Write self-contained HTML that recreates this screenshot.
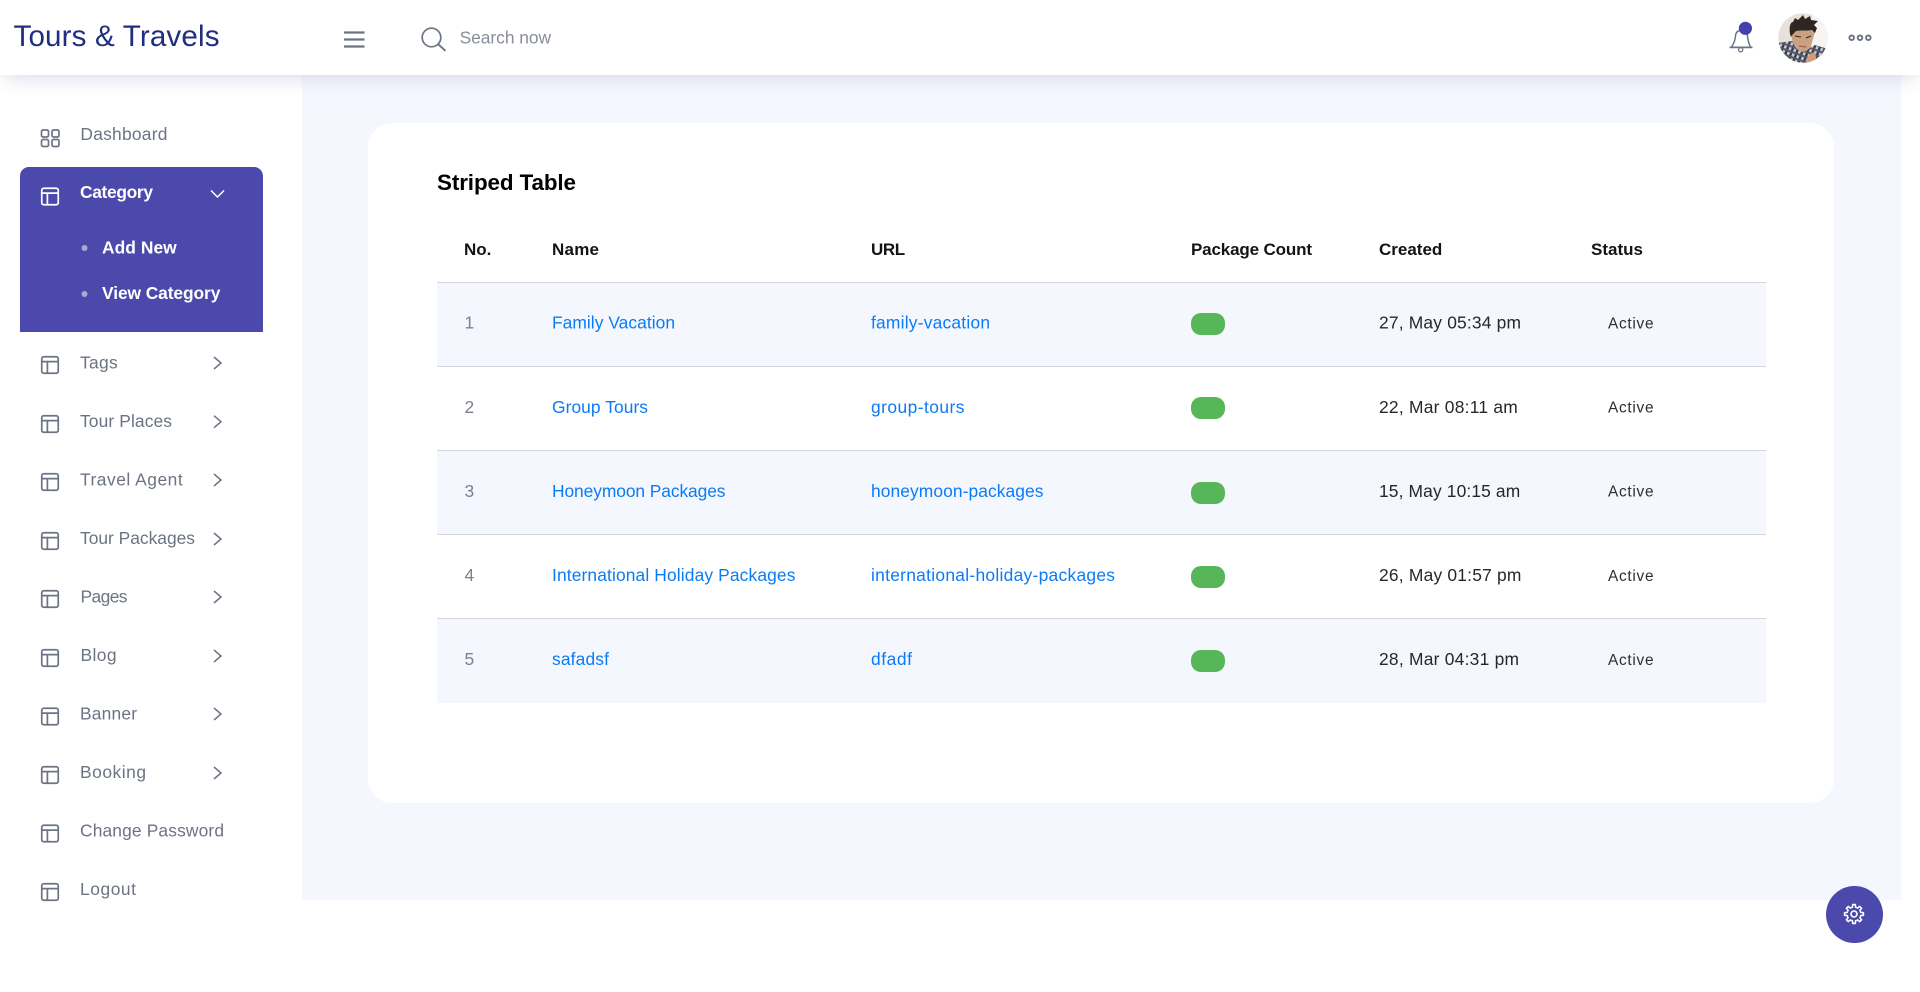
<!DOCTYPE html>
<html lang="en"><head><meta charset="utf-8"><title>Tours &amp; Travels</title>
<style>
html,body{margin:0;padding:0;background:#fff;width:1920px;height:992px;overflow:hidden}
body{position:relative;font-family:"Liberation Sans",sans-serif}
.b{position:absolute}
svg{position:absolute;left:0;top:0}
text{font-family:"Liberation Sans",sans-serif;font-size:17.4px}
.nav{fill:#6c7383}
.th{font-weight:700;fill:#141414;font-size:17px}
.a{fill:#0b7bf5}
.n{fill:#7b808d}
.d{fill:#24272c}
.s{font-size:15.4px;fill:#2c2f34}
.w{fill:#fff;font-weight:600}
.ic{fill:none;stroke:#6c7383;stroke-width:1.7}
.ch{fill:none;stroke:#6c7383;stroke-width:1.5}
</style></head><body>
<div class="b" style="left:302px;top:75px;width:1599px;height:825px;background:#f5f7ff"></div>
<div class="b" style="left:368px;top:123px;width:1466px;height:680px;background:#fff;border-radius:24px"></div>
<div class="b" style="left:437px;top:282px;width:1329px;height:1px;background:#d3d6de"></div>
<div class="b" style="left:437px;top:283px;width:1329px;height:83px;background:#f5f7ff"></div>
<div class="b" style="left:437px;top:366px;width:1329px;height:1px;background:#d3d6de"></div>
<div class="b" style="left:437px;top:450px;width:1329px;height:1px;background:#d3d6de"></div>
<div class="b" style="left:437px;top:451px;width:1329px;height:83px;background:#f5f7ff"></div>
<div class="b" style="left:437px;top:534px;width:1329px;height:1px;background:#d3d6de"></div>
<div class="b" style="left:437px;top:618px;width:1329px;height:1px;background:#d3d6de"></div>
<div class="b" style="left:437px;top:619px;width:1329px;height:84px;background:#f5f7ff"></div>
<div class="b" style="left:1191px;top:313px;width:34px;height:22px;border-radius:10px;background:#57b657"></div>
<div class="b" style="left:1191px;top:397px;width:34px;height:22px;border-radius:10px;background:#57b657"></div>
<div class="b" style="left:1191px;top:482px;width:34px;height:22px;border-radius:10px;background:#57b657"></div>
<div class="b" style="left:1191px;top:566px;width:34px;height:22px;border-radius:10px;background:#57b657"></div>
<div class="b" style="left:1191px;top:650px;width:34px;height:22px;border-radius:10px;background:#57b657"></div>
<div class="b" style="left:20px;top:167px;width:243px;height:165px;background:#4b49ac;border-radius:9px 9px 0 0"></div>
<div class="b" style="left:0;top:0;width:1920px;height:75px;background:#fff;box-shadow:0 5px 21px -5px #cdd1e1"></div>
<div class="b" style="left:1825.5px;top:885.5px;width:57px;height:57px;border-radius:50%;background:#4b49ac"></div>

<svg width="1920" height="992" viewBox="0 0 1920 992" xmlns="http://www.w3.org/2000/svg">
<defs>
<g id="lay"><rect x=".75" y=".75" width="16.5" height="16.5" rx="2"/><path d="M.75 5.6H17.25M6.4 5.6V17.25"/></g>
<clipPath id="av"><circle cx="1803" cy="38" r="24.7"/></clipPath>
<pattern id="pl" width="5" height="5" patternUnits="userSpaceOnUse" patternTransform="rotate(20)"><rect width="5" height="5" fill="#c9cbd3"/><rect width="2.5" height="5" fill="#3c3f4e"/><rect width="5" height="2" fill="#555868"/></pattern>
</defs>

<!-- header -->
<text x="13.5" y="46" style="font-size:29.6px" fill="#1f2e80" textLength="206" lengthAdjust="spacing">Tours &amp; Travels</text>
<path d="M344 32.5H364.5M344 39.5H364.5M344 46.5H364.5" fill="none" stroke="#6c7383" stroke-width="2.2"/>
<circle cx="431.5" cy="37.5" r="9.3" fill="none" stroke="#6c7383" stroke-width="1.7"/><path d="M438.3 44.3L445.5 50.8" stroke="#6c7383" stroke-width="1.9" fill="none"/>
<text x="459.6" y="43.5" fill="#898e9b" textLength="91.5" lengthAdjust="spacing">Search now</text>
<path d="M1731.5 47Q1735 42 1735.5 36Q1736 30.5 1741 30.5Q1747 30.5 1747.5 36Q1748 42 1750.5 47" fill="none" stroke="#6c7383" stroke-width="1.5"/>
<path d="M1729.5 47.4H1752.5" stroke="#6c7383" stroke-width="1.8"/>
<circle cx="1740.7" cy="49.8" r="2.1" fill="#fff" stroke="#6c7383" stroke-width="1.2"/>
<circle cx="1745.4" cy="28.3" r="6.6" fill="#4540ae"/>
<g clip-path="url(#av)">
<rect x="1778" y="13" width="50" height="50" fill="#e9e0da"/>
<rect x="1812" y="13" width="16" height="36" fill="#f7f5f3"/>
<path d="M1778 43L1792 41L1802 52L1815 45L1828 49V63H1778Z" fill="url(#pl)"/>
<path d="M1792 31C1791 40 1793 47 1800 51C1806 53 1811 49 1812 42L1815 32L1806 27Z" fill="#c9a080"/>
<path d="M1790 34C1789 28 1790 22 1793 22L1795 18L1798 20L1803 15L1805 19L1810 16L1811 20L1818 21L1814 25L1817 28L1815 33L1812 30C1806 31 1800 30 1796 31C1794 33 1792 35 1791 37Z" fill="#2d2623"/>
<path d="M1795 36L1801 37M1806 38L1811 36" stroke="#3b2a22" stroke-width="1.1"/>
<path d="M1799 46L1806 47" stroke="#8e5b4a" stroke-width="1.1"/>
<path d="M1806 63C1806 57 1810 53 1815 52L1817 63Z" fill="#d39b7a"/>
</g>
<g fill="none" stroke="#6c7383" stroke-width="1.9"><circle cx="1851.7" cy="37.7" r="2.3"/><circle cx="1860" cy="37.7" r="2.3"/><circle cx="1868.3" cy="37.7" r="2.3"/></g>

<!-- sidebar -->
<g class="ic"><rect x="41.5" y="130" width="7" height="7" rx="1.6"/><rect x="52" y="130" width="7" height="7" rx="1.6"/><rect x="41.5" y="139.5" width="7" height="7" rx="1.6"/><rect x="52" y="139.5" width="7" height="7" rx="1.6"/></g>
<text class="nav" x="80.4" y="140" textLength="87" lengthAdjust="spacing">Dashboard</text>

<g transform="translate(41,187.5)" fill="none" stroke="#fff" stroke-width="1.7"><use href="#lay"/></g>
<text class="w" x="80" y="198" textLength="73" lengthAdjust="spacing">Category</text>
<path d="M211 190.5L217.5 197L224 190.5" fill="none" stroke="#fff" stroke-width="1.5"/>
<circle cx="84.5" cy="248" r="3" fill="#a9a8cf"/>
<text class="w" x="102" y="253.3" textLength="74.7" lengthAdjust="spacing">Add New</text>
<circle cx="84.5" cy="294" r="3" fill="#a9a8cf"/>
<text class="w" x="102" y="299.2" textLength="118.4" lengthAdjust="spacing">View Category</text>

<g class="ic">
<use href="#lay" x="41" y="356"/><use href="#lay" x="41" y="415"/><use href="#lay" x="41" y="473"/><use href="#lay" x="41" y="532"/><use href="#lay" x="41" y="590"/><use href="#lay" x="41" y="649"/><use href="#lay" x="41" y="707.5"/><use href="#lay" x="41" y="766"/><use href="#lay" x="41" y="824.5"/><use href="#lay" x="41" y="883"/>
</g>
<g class="ch">
<path d="M214 357L221 363L214 369"/><path d="M214 415.7L221 421.7L214 427.7"/><path d="M214 474L221 480L214 486"/><path d="M214 533L221 539L214 545"/><path d="M214 591L221 597L214 603"/><path d="M214 650L221 656L214 662"/><path d="M214 708L221 714L214 720"/><path d="M214 767L221 773L214 779"/>
</g>
<text class="nav" x="80" y="368.3" textLength="37.7" lengthAdjust="spacing">Tags</text>
<text class="nav" x="80" y="426.8" textLength="92" lengthAdjust="spacing">Tour Places</text>
<text class="nav" x="80" y="485.3" textLength="102.7" lengthAdjust="spacing">Travel Agent</text>
<text class="nav" x="80" y="543.8" textLength="115" lengthAdjust="spacing">Tour Packages</text>
<text class="nav" x="80.5" y="602.3" textLength="47" lengthAdjust="spacing">Pages</text>
<text class="nav" x="80.5" y="660.8" textLength="36" lengthAdjust="spacing">Blog</text>
<text class="nav" x="80" y="719.3" textLength="57" lengthAdjust="spacing">Banner</text>
<text class="nav" x="80" y="777.8" textLength="66" lengthAdjust="spacing">Booking</text>
<text class="nav" x="80" y="836.3" textLength="144" lengthAdjust="spacing">Change Password</text>
<text class="nav" x="80" y="894.8" textLength="56" lengthAdjust="spacing">Logout</text>

<!-- card -->
<text x="437" y="190" style="font-size:22.4px;font-weight:700" fill="#000" textLength="139" lengthAdjust="spacing">Striped Table</text>
<text class="th" x="464" y="255" textLength="27.4" lengthAdjust="spacing">No.</text>
<text class="th" x="552" y="255" textLength="47" lengthAdjust="spacing">Name</text>
<text class="th" x="871" y="255" textLength="34.2" lengthAdjust="spacing">URL</text>
<text class="th" x="1191" y="255" textLength="121" lengthAdjust="spacing">Package Count</text>
<text class="th" x="1379" y="255" textLength="63.3" lengthAdjust="spacing">Created</text>
<text class="th" x="1591" y="255" textLength="52" lengthAdjust="spacing">Status</text>

<text class="n" x="464.5" y="328.5">1</text>
<text class="a" x="552" y="328.5" textLength="123" lengthAdjust="spacing">Family Vacation</text>
<text class="a" x="871" y="328.5" textLength="119" lengthAdjust="spacing">family-vacation</text>
<text class="d" x="1379" y="328.5" textLength="142" lengthAdjust="spacing">27, May 05:34 pm</text>
<text class="s" x="1608" y="328.5" textLength="45.5" lengthAdjust="spacing">Active</text>

<text class="n" x="464.5" y="413">2</text>
<text class="a" x="552" y="413" textLength="96" lengthAdjust="spacing">Group Tours</text>
<text class="a" x="871" y="413" textLength="93.5" lengthAdjust="spacing">group-tours</text>
<text class="d" x="1379" y="413" textLength="138.8" lengthAdjust="spacing">22, Mar 08:11 am</text>
<text class="s" x="1608" y="412.5" textLength="45.5" lengthAdjust="spacing">Active</text>

<text class="n" x="464.5" y="497">3</text>
<text class="a" x="552" y="497" textLength="173.5" lengthAdjust="spacing">Honeymoon Packages</text>
<text class="a" x="871" y="497" textLength="172.5" lengthAdjust="spacing">honeymoon-packages</text>
<text class="d" x="1379" y="497" textLength="141.2" lengthAdjust="spacing">15, May 10:15 am</text>
<text class="s" x="1608" y="496.5" textLength="45.5" lengthAdjust="spacing">Active</text>

<text class="n" x="464.5" y="581">4</text>
<text class="a" x="552" y="581" textLength="243.4" lengthAdjust="spacing">International Holiday Packages</text>
<text class="a" x="871" y="581" textLength="244" lengthAdjust="spacing">international-holiday-packages</text>
<text class="d" x="1379" y="581" textLength="142.4" lengthAdjust="spacing">26, May 01:57 pm</text>
<text class="s" x="1608" y="581" textLength="45.5" lengthAdjust="spacing">Active</text>

<text class="n" x="464.5" y="665">5</text>
<text class="a" x="552" y="665" textLength="57" lengthAdjust="spacing">safadsf</text>
<text class="a" x="871" y="665" textLength="41" lengthAdjust="spacing">dfadf</text>
<text class="d" x="1379" y="665" textLength="140" lengthAdjust="spacing">28, Mar 04:31 pm</text>
<text class="s" x="1608" y="665" textLength="45.5" lengthAdjust="spacing">Active</text>

<!-- gear -->
<g transform="translate(1854,914)" fill="none" stroke="#fff" stroke-width="1.6" stroke-linejoin="round">
<circle r="3"/>
<path d="M6.47 -2.68L6.82 -1.57L9.41 -1.32V1.32L6.82 1.57L6.47 2.68" transform="rotate(0)"/>
<path d="M6.47 -2.68L6.82 -1.57L9.41 -1.32V1.32L6.82 1.57L6.47 2.68" transform="rotate(45)"/>
<path d="M6.47 -2.68L6.82 -1.57L9.41 -1.32V1.32L6.82 1.57L6.47 2.68" transform="rotate(90)"/>
<path d="M6.47 -2.68L6.82 -1.57L9.41 -1.32V1.32L6.82 1.57L6.47 2.68" transform="rotate(135)"/>
<path d="M6.47 -2.68L6.82 -1.57L9.41 -1.32V1.32L6.82 1.57L6.47 2.68" transform="rotate(180)"/>
<path d="M6.47 -2.68L6.82 -1.57L9.41 -1.32V1.32L6.82 1.57L6.47 2.68" transform="rotate(225)"/>
<path d="M6.47 -2.68L6.82 -1.57L9.41 -1.32V1.32L6.82 1.57L6.47 2.68" transform="rotate(270)"/>
<path d="M6.47 -2.68L6.82 -1.57L9.41 -1.32V1.32L6.82 1.57L6.47 2.68" transform="rotate(315)"/>
</g>
</svg>
</body></html>
